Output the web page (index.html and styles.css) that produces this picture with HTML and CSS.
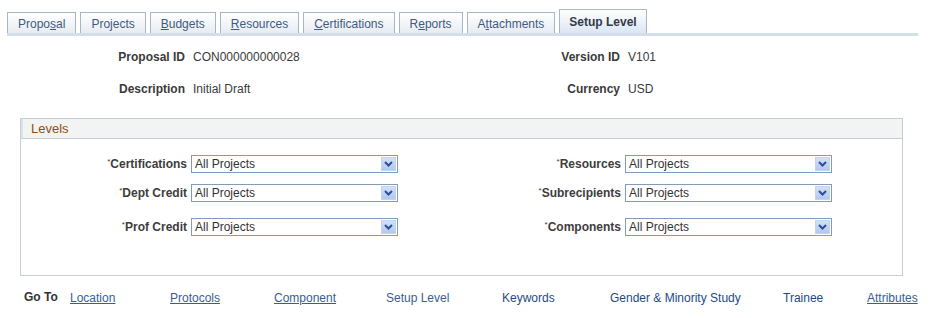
FILE: index.html
```html
<!DOCTYPE html>
<html lang="en">
<head>
  <meta charset="UTF-8">
  <title>Setup Level</title>
  <link rel="stylesheet" href="styles.css">
</head>
<body>
  <!-- Page tabs -->
  <nav class="tabs">
    <a class="tab">Propo<u>s</u>al</a>
    <a class="tab">Pro<u>j</u>ects</a>
    <a class="tab"><u>B</u>udgets</a>
    <a class="tab"><u>R</u>esources</a>
    <a class="tab"><u>C</u>ertifications</a>
    <a class="tab">R<u>e</u>ports</a>
    <a class="tab">A<u>t</u>tachments</a>
    <a class="tab active">Setup Level</a>
  </nav>

  <!-- Proposal header -->
  <section class="header-fields">
    <span class="label">Proposal ID</span>
    <span class="value">CON000000000028</span>
    <span class="label">Version ID</span>
    <span class="value">V101</span>
    <span class="label">Description</span>
    <span class="value">Initial Draft</span>
    <span class="label">Currency</span>
    <span class="value">USD</span>
  </section>

  <!-- Levels group box -->
  <section class="group">
    <div class="group-title">Levels</div>
    <div class="levels">
      <label class="label"><sup>*</sup>Certifications</label>
      <div class="dropdown"><span>All Projects</span><i class="arrow"><svg width="9" height="6" viewBox="0 0 9 6"><path d="M1 1 L4.5 4.5 L8 1" fill="none" stroke="#2a4f9a" stroke-width="2"/></svg></i></div>
      <label class="label"><sup>*</sup>Resources</label>
      <div class="dropdown"><span>All Projects</span><i class="arrow"><svg width="9" height="6" viewBox="0 0 9 6"><path d="M1 1 L4.5 4.5 L8 1" fill="none" stroke="#2a4f9a" stroke-width="2"/></svg></i></div>

      <label class="label"><sup>*</sup>Dept Credit</label>
      <div class="dropdown"><span>All Projects</span><i class="arrow"><svg width="9" height="6" viewBox="0 0 9 6"><path d="M1 1 L4.5 4.5 L8 1" fill="none" stroke="#2a4f9a" stroke-width="2"/></svg></i></div>
      <label class="label"><sup>*</sup>Subrecipients</label>
      <div class="dropdown"><span>All Projects</span><i class="arrow"><svg width="9" height="6" viewBox="0 0 9 6"><path d="M1 1 L4.5 4.5 L8 1" fill="none" stroke="#2a4f9a" stroke-width="2"/></svg></i></div>

      <label class="label"><sup>*</sup>Prof Credit</label>
      <div class="dropdown"><span>All Projects</span><i class="arrow"><svg width="9" height="6" viewBox="0 0 9 6"><path d="M1 1 L4.5 4.5 L8 1" fill="none" stroke="#2a4f9a" stroke-width="2"/></svg></i></div>
      <label class="label"><sup>*</sup>Components</label>
      <div class="dropdown"><span>All Projects</span><i class="arrow"><svg width="9" height="6" viewBox="0 0 9 6"><path d="M1 1 L4.5 4.5 L8 1" fill="none" stroke="#2a4f9a" stroke-width="2"/></svg></i></div>
    </div>
  </section>

  <!-- Go To links -->
  <footer class="goto">
    <span class="goto-label">Go To</span>
    <a class="link" href="#">Location</a>
    <a class="link" href="#">Protocols</a>
    <a class="link" href="#">Component</a>
    <span class="plain light">Setup Level</span>
    <span class="plain">Keywords</span>
    <span class="plain">Gender &amp; Minority Study</span>
    <span class="plain">Trainee</span>
    <a class="link" href="#">Attributes</a>
  </footer>
</body>
</html>
```

FILE: styles.css
```css
/* General Styles */
body {
  margin: 0;
  padding: 0;
  background: #fff;
  font-family: Arial, "Liberation Sans", sans-serif;
  font-size: 12px;
  color: #333;
}

/* Tabs */
.tabs {
  display: flex;
  align-items: flex-end;
  gap: 4px;
  margin: 9px 17px 0 7px;
  border-bottom: 3px solid #d3deeb;
  height: 24px;
}

.tab {
  display: flex;
  align-items: center;
  height: 21px;
  padding: 1px 10px 0 10px;
  border: 1px solid #a9b6c6;
  border-bottom: none;
  box-sizing: border-box;
  background: linear-gradient(#ffffff, #e7ecf2);
  color: #3e5a82;
  font-size: 12px;
  cursor: pointer;
}

.tab.active {
  height: 24px;
  padding: 0 9px;
  background: linear-gradient(#ffffff, #dbe6f3);
  color: #333b47;
  font-weight: bold;
}

/* Header fields */
.header-fields {
  display: grid;
  grid-template-columns: 185px 250px 169px auto;
  grid-auto-rows: 32px;
  column-gap: 8px;
  align-items: center;
  margin-top: 5px;
}

.label {
  text-align: right;
  font-weight: bold;
  color: #3a3a3a;
}

.label sup {
  font-size: 8px;
  font-weight: normal;
  vertical-align: 4px;
  line-height: 0;
}

.value {
  color: #3a3a3a;
}

/* Group box */
.group {
  margin: 13px 32px 0 20px;
  border: 1px solid #c7cdd6;
  height: 158px;
  box-sizing: border-box;
}

.group-title {
  height: 19px;
  line-height: 19px;
  padding-left: 8px;
  background: #f2f4f4;
  border-bottom: 1px solid #c7cdd6;
  border-left: 2px solid #dfe3e6;
  color: #9a4b04;
  font-size: 13px;
}

.levels {
  display: grid;
  grid-template-columns: 166px 207px 219px 207px;
  grid-template-rows: 18px 29px 34px;
  column-gap: 4px;
  align-items: end;
  padding-top: 16px;
}

.levels .label {
  line-height: 18px;
  font-size: 12px;
  color: #3d3d3d;
}

.dropdown {
  display: flex;
  align-items: center;
  justify-content: space-between;
  height: 18px;
  box-sizing: border-box;
  border: 1px solid #7f9db9;
  background: #fff;
  padding: 0 0 0 3px;
  color: #333;
}

.arrow {
  display: flex;
  align-items: center;
  justify-content: center;
  width: 15px;
  height: 14px;
  margin-right: 1px;
  background: linear-gradient(#d3e0f7, #b2c8ee);
  border: 1px solid #c4d3ee;
  box-sizing: border-box;
}

/* Go To row */
.goto {
  display: grid;
  grid-template-columns: 46px 100px 104px 112px 116px 108px 173px 84px auto;
  align-items: center;
  margin: 15px 0 0 24px;
  font-size: 12px;
}

.goto-label {
  font-weight: bold;
  color: #333;
  margin-top: -3px;
}

.link {
  color: #3a5d8e;
}

.plain {
  color: #1d4a86;
}

.plain.light {
  color: #3a5d8e;
}
```
